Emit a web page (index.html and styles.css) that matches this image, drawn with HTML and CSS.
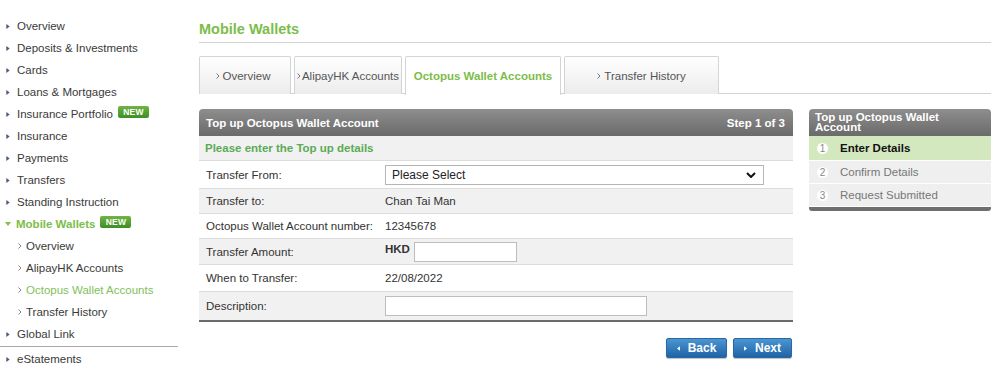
FILE: index.html
```html
<!DOCTYPE html>
<html>
<head>
<meta charset="utf-8">
<link rel="stylesheet" href="styles.css">
</head>
<body>
<div class="page">
  <nav class="sidebar">
    <ul class="nav">
      <li class="nav-item"><svg class="tri" viewBox="0 0 4 6"><path d="M0 0L4 3L0 6Z"/></svg>Overview</li>
      <li class="nav-item"><svg class="tri" viewBox="0 0 4 6"><path d="M0 0L4 3L0 6Z"/></svg>Deposits &amp; Investments</li>
      <li class="nav-item"><svg class="tri" viewBox="0 0 4 6"><path d="M0 0L4 3L0 6Z"/></svg>Cards</li>
      <li class="nav-item"><svg class="tri" viewBox="0 0 4 6"><path d="M0 0L4 3L0 6Z"/></svg>Loans &amp; Mortgages</li>
      <li class="nav-item"><svg class="tri" viewBox="0 0 4 6"><path d="M0 0L4 3L0 6Z"/></svg>Insurance Portfolio<span class="badge">NEW</span></li>
      <li class="nav-item"><svg class="tri" viewBox="0 0 4 6"><path d="M0 0L4 3L0 6Z"/></svg>Insurance</li>
      <li class="nav-item"><svg class="tri" viewBox="0 0 4 6"><path d="M0 0L4 3L0 6Z"/></svg>Payments</li>
      <li class="nav-item"><svg class="tri" viewBox="0 0 4 6"><path d="M0 0L4 3L0 6Z"/></svg>Transfers</li>
      <li class="nav-item"><svg class="tri" viewBox="0 0 4 6"><path d="M0 0L4 3L0 6Z"/></svg>Standing Instruction</li>
      <li class="nav-item nav-open"><svg class="tri-down" viewBox="0 0 6 4"><path d="M0 0L6 0L3 4Z"/></svg>Mobile Wallets<span class="badge">NEW</span></li>
      <li class="nav-sub"><svg class="chev" viewBox="0 0 4 6"><path d="M0.5 0.5L3 3L0.5 5.5"/></svg>Overview</li>
      <li class="nav-sub"><svg class="chev" viewBox="0 0 4 6"><path d="M0.5 0.5L3 3L0.5 5.5"/></svg>AlipayHK Accounts</li>
      <li class="nav-sub nav-sub-active"><svg class="chev" viewBox="0 0 4 6"><path d="M0.5 0.5L3 3L0.5 5.5"/></svg>Octopus Wallet Accounts</li>
      <li class="nav-sub"><svg class="chev" viewBox="0 0 4 6"><path d="M0.5 0.5L3 3L0.5 5.5"/></svg>Transfer History</li>
      <li class="nav-item"><svg class="tri" viewBox="0 0 4 6"><path d="M0 0L4 3L0 6Z"/></svg>Global Link</li>
      <li class="nav-sep"></li>
      <li class="nav-item"><svg class="tri" viewBox="0 0 4 6"><path d="M0 0L4 3L0 6Z"/></svg>eStatements</li>
    </ul>
  </nav>

  <main class="main">
    <h1 class="title">Mobile Wallets</h1>

    <div class="tabs">
      <div class="tab tab-1"><svg class="chev" viewBox="0 0 4 6"><path d="M0.5 0.5L3 3L0.5 5.5"/></svg>Overview</div>
      <div class="tab tab-2"><svg class="chev chev-tight" viewBox="0 0 4 6"><path d="M0.5 0.5L3 3L0.5 5.5"/></svg>AlipayHK Accounts</div>
      <div class="tab tab-3 tab-active">Octopus Wallet Accounts</div>
      <div class="tab tab-4"><svg class="chev" viewBox="0 0 4 6"><path d="M0.5 0.5L3 3L0.5 5.5"/></svg>Transfer History</div>
    </div>

    <div class="content">
      <section class="form-col">
        <div class="panel">
          <div class="panel-head">
            <span>Top up Octopus Wallet Account</span>
            <span>Step 1 of 3</span>
          </div>
          <div class="row row-intro gray">Please enter the Top up details</div>
          <div class="row row-tall">
            <div class="label">Transfer From:</div>
            <div class="value">
              <div class="select-wrap">
                <select class="select"><option>Please Select</option></select>
                <svg class="select-arrow" viewBox="0 0 10 6"><path d="M1 1L5 5L9 1"/></svg>
              </div>
            </div>
          </div>
          <div class="row gray">
            <div class="label">Transfer to:</div>
            <div class="value">Chan Tai Man</div>
          </div>
          <div class="row">
            <div class="label">Octopus Wallet Account number:</div>
            <div class="value">12345678</div>
          </div>
          <div class="row row-mid gray">
            <div class="label">Transfer Amount:</div>
            <div class="value"><span class="ccy">HKD</span><input class="input input-amount" type="text"></div>
          </div>
          <div class="row row-when">
            <div class="label">When to Transfer:</div>
            <div class="value">22/08/2022</div>
          </div>
          <div class="row row-last gray">
            <div class="label">Description:</div>
            <div class="value"><input class="input input-desc" type="text"></div>
          </div>
        </div>
        <div class="actions">
          <button class="btn"><svg class="btn-tri" viewBox="0 0 4 6"><path d="M4 0L0 3L4 6Z"/></svg>Back</button>
          <button class="btn btn-next"><svg class="btn-tri" viewBox="0 0 4 6"><path d="M0 0L4 3L0 6Z"/></svg>Next</button>
        </div>
      </section>

      <aside class="steps">
        <div class="steps-head">Top up Octopus Wallet Account</div>
        <div class="step step-current"><span class="num">1</span>Enter Details</div>
        <div class="step"><span class="num">2</span>Confirm Details</div>
        <div class="step"><span class="num">3</span>Request Submitted</div>
        <div class="steps-foot"></div>
      </aside>
    </div>
  </main>
</div>
</body>
</html>
```

FILE: styles.css
```css
* { box-sizing: border-box; }

html, body {
  margin: 0;
  padding: 0;
  background: #fff;
}

body {
  font-family: "Liberation Sans", Arial, Helvetica, sans-serif;
  font-size: 11.5px;
  color: #333;
}

.page {
  display: flex;
  align-items: flex-start;
}

/* Sidebar */
.sidebar {
  width: 178px;
  flex: none;
  padding-top: 15px;
}

.nav {
  list-style: none;
  margin: 0;
  padding: 0;
}

.nav-item,
.nav-sub {
  display: flex;
  align-items: center;
  height: 22px;
  white-space: nowrap;
  color: #3a3a3a;
}

.nav-item { padding-left: 6px; }

.tri {
  width: 4px;
  height: 5px;
  margin-right: 7px;
  fill: #4b5d74;
  flex: none;
}

.tri-down {
  width: 6px;
  height: 4px;
  margin-right: 5px;
  margin-left: -1px;
  fill: #7fbf4f;
  flex: none;
}

.nav-open {
  color: #7cbd4a;
  font-weight: bold;
}

.nav-sub { padding-left: 18px; }

.nav-sub .chev { margin-right: 4px; }

.nav-sub-active { color: #82c15a; }

.chev {
  width: 4px;
  height: 6px;
  fill: none;
  stroke: #777;
  stroke-width: 0.9;
  flex: none;
}

.nav-sep {
  height: 1px;
  margin: 1px 0 1px;
  background: #a9a9a9;
}

.badge {
  display: inline-block;
  margin-left: 5px;
  margin-top: -4px;
  width: 31px;
  height: 12px;
  line-height: 12px;
  border-radius: 2px;
  background: linear-gradient(#6fb542, #3e8e27);
  color: #fff;
  font-size: 8.5px;
  font-weight: bold;
  text-align: center;
  letter-spacing: 0.2px;
}

/* Main */
.main {
  margin-left: 21px;
  width: 792px;
  flex: none;
}

.title {
  margin: 0;
  padding: 20px 0 4px 0;
  height: 43px;
  line-height: 18px;
  font-size: 14.5px;
  font-weight: bold;
  color: #7cbd4a;
  border-bottom: 1px solid #d2d2d2;
}

.tabs {
  display: flex;
  gap: 3px;
  margin-top: 13px;
  height: 38px;
  border-bottom: 1px solid #d2d2d2;
}

.tab {
  height: 38px;
  display: flex;
  align-items: center;
  justify-content: center;
  white-space: nowrap;
  color: #555;
  border: 1px solid #d4d4d4;
  border-bottom: none;
  background: linear-gradient(#ffffff, #ececec);
  border-radius: 2px 2px 0 0;
}

.tab .chev { margin-right: 3px; stroke: #667; }
.tab .chev-tight { margin-right: 1px; }

.tab-1 { width: 92px; padding-right: 4px; }
.tab-2 { width: 108px; }
.tab-3 { width: 156px; }
.tab-4 { width: 155px; }

.tab-active {
  background: #fff;
  height: 39px;
  margin-bottom: -1px;
  color: #7cbd4a;
  font-weight: bold;
}

.content {
  display: flex;
  gap: 16px;
  margin-top: 15px;
  align-items: flex-start;
}

.form-col {
  width: 594px;
  flex: none;
}

.panel-head {
  height: 27px;
  display: flex;
  align-items: center;
  justify-content: space-between;
  padding: 0 8px 0 7px;
  background: linear-gradient(#8e8e8e, #6a6a6a);
  border-radius: 4px 4px 0 0;
  color: #fff;
  font-weight: bold;
}

.row {
  display: flex;
  align-items: center;
  height: 25px;
  border-bottom: 1px solid #dcdcdc;
  background: #fff;
}

.row.gray { background: #f1f1f1; }

.row-intro {
  padding-left: 6px;
  color: #5aab55;
  font-weight: bold;
}

.row-tall { height: 28px; }
.row-mid { height: 26px; }
.row-when { height: 27px; }

.row-last {
  height: 30px;
  border-bottom: 2px solid #6b6b6b;
}

.label {
  width: 186px;
  padding-left: 7px;
  flex: none;
}

.value {
  display: flex;
  align-items: center;
  flex: 1;
}

.select-wrap {
  position: relative;
  width: 379px;
  height: 20px;
}

.select {
  -webkit-appearance: none;
  appearance: none;
  width: 100%;
  height: 20px;
  margin: 0;
  padding: 0 0 0 6px;
  border: 1px solid #b5b5b5;
  border-radius: 0;
  background: #fff;
  font-family: inherit;
  font-size: 12px;
  color: #222;
}

.select-arrow {
  position: absolute;
  right: 8px;
  top: 7px;
  width: 10px;
  height: 6px;
  fill: none;
  stroke: #111;
  stroke-width: 2;
  pointer-events: none;
}

.ccy {
  font-weight: bold;
  margin-right: 4px;
  margin-top: -6px;
}

.input {
  height: 20px;
  margin: 0;
  border: 1px solid #bdbdbd;
  background: #fff;
  border-radius: 0;
  padding: 0 4px;
  font-family: inherit;
}

.input-amount { width: 103px; }
.input-desc { width: 262px; }

.actions {
  display: flex;
  justify-content: flex-end;
  gap: 6px;
  margin-top: 16px;
  padding-right: 1px;
}

.btn {
  display: flex;
  align-items: center;
  justify-content: center;
  width: 61px;
  height: 20px;
  padding: 0;
  border: 1px solid #2b67a0;
  border-radius: 2px;
  background: linear-gradient(#4b96d2, #1f63a5);
  box-shadow: 0 1px 1px rgba(0,0,0,0.25);
  color: #fff;
  font-family: inherit;
  font-size: 12px;
  font-weight: bold;
}

.btn-next { width: 59px; }

.btn-tri {
  width: 3px;
  height: 5px;
  fill: #fff;
  margin-right: 8px;
}

/* Steps box */
.steps {
  width: 182px;
  flex: none;
}

.steps-head {
  height: 27px;
  padding: 3px 6px 0;
  line-height: 10px;
  background: linear-gradient(#8e8e8e, #6a6a6a);
  border-radius: 4px 4px 0 0;
  color: #fff;
  font-weight: bold;
}

.step {
  display: flex;
  align-items: center;
  height: 23px;
  padding-left: 8px;
  background: #efefef;
  border-bottom: 1px solid #fff;
  color: #777;
}

.step-current {
  height: 25px;
  background: #d4e8bf;
  color: #111;
  font-weight: bold;
}

.num {
  width: 11px;
  height: 11px;
  border-radius: 50%;
  background: #fff;
  color: #888;
  font-size: 10px;
  font-weight: normal;
  line-height: 11px;
  text-align: center;
  margin-right: 12px;
  flex: none;
}

.steps-foot {
  height: 4px;
  background: #6e6e6e;
  border-radius: 0 0 3px 3px;
}
```
